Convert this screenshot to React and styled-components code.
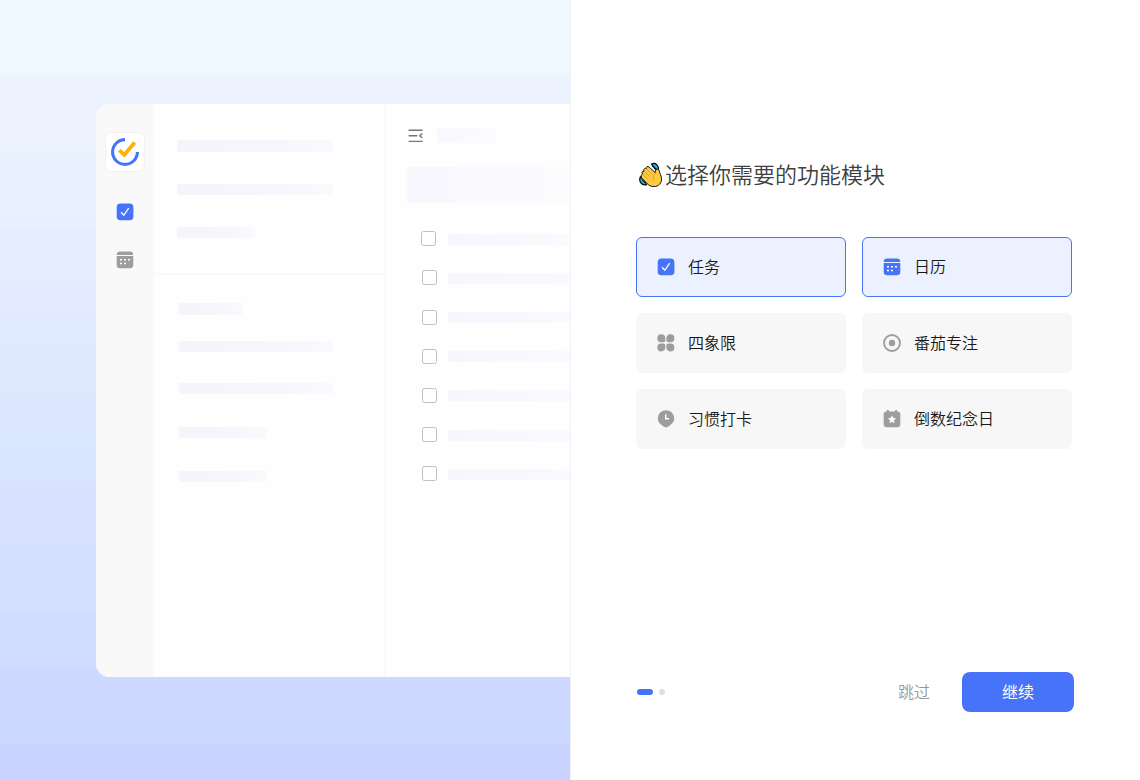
import React, { useState } from 'react';
import styled, { createGlobalStyle } from 'styled-components';

const GlobalStyle = createGlobalStyle`
  body {
    margin: 0;
    background: #fff;
    font-family: 'Noto Sans CJK SC', sans-serif;
  }
`;

const Page = styled.div`
  display: flex;
  width: 1140px;
  height: 780px;
  overflow: hidden;
`;

const Preview = styled.div`
  box-sizing: border-box;
  width: 570px;
  padding: 104px 0 0 96px;
  overflow: hidden;
  background: linear-gradient(
    180deg,
    #f0f8ff 0,
    #f0f8ff 74px,
    #ecf3ff 76px,
    #ecf3ff 150px,
    #e8f2ff 154px,
    #e6f0ff 228px,
    #e4eeff 232px,
    #e4edff 280px,
    #e3ebff 284px,
    #e2eaff 328px,
    #dfeaff 340px,
    #dde8ff 400px,
    #dbe6ff 440px,
    #d9e5ff 485px,
    #d8e2ff 488px,
    #d8e1ff 538px,
    #d3e1ff 546px,
    #d3e0ff 610px,
    #d0dcff 616px,
    #cfdbff 664px,
    #cdd9ff 670px,
    #cbd8ff 742px,
    #c8d4ff 746px,
    #c8d4ff 780px
  );
`;

const AppWindow = styled.div`
  display: flex;
  width: 474px;
  height: 573px;
  overflow: hidden;
  background: #fefefe;
  border-radius: 14px 0 0 14px;
`;

const Rail = styled.div`
  display: flex;
  flex-direction: column;
  align-items: center;
  width: 58px;
  padding-top: 29px;
  background: #f9f9f9;
`;

const Logo = styled.div`
  display: flex;
  align-items: center;
  justify-content: center;
  width: 38px;
  height: 38px;
  margin-bottom: 31px;
  background: #fff;
  border-radius: 6px;
  box-shadow: 0 0 0 1px #f1f1f1;
`;

const RailItem = styled.div`
  display: flex;
  height: 20px;
  margin-bottom: 28px;
`;

const Lists = styled.div`
  box-sizing: border-box;
  width: 232px;
  border-right: 2px solid #f9f9f9;
`;

const ListGroup = styled.div`
  box-sizing: border-box;
  height: ${({ $height }) => $height}px;
  padding: ${({ $pad }) => $pad};
  border-bottom: ${({ $line }) => ($line ? '2px solid #fafafa' : 'none')};
`;

const Bar = styled.div`
  width: ${({ $width }) => $width}px;
  height: ${({ $height }) => $height || 11}px;
  margin-bottom: ${({ $gap }) => $gap || 0}px;
  background: linear-gradient(90deg, #f4f5fb, #f6f7fc 70%, #faf9fe);
  border-radius: 2px;
`;

const Tasks = styled.div`
  flex: 1;
  min-width: 0;
  padding: 23px 0 0 21px;
  overflow: hidden;
`;

const TasksHeader = styled.div`
  display: flex;
  align-items: center;
  gap: 13px;
  height: 17px;
  margin-bottom: 23px;
`;

const HeaderBar = styled.div`
  width: 59px;
  height: 15px;
  background: linear-gradient(90deg, #f8f8fe, #fbfbff);
  border-radius: 2px;
`;

const InputBar = styled.div`
  height: 36px;
  margin-bottom: 27.8px;
  background: linear-gradient(90deg, #f8f8fe 0 46px, #faf9fe 46px 137px, #fbfbfe 137px);
  border-radius: 3px 0 0 3px;
`;

const TaskRow = styled.div`
  display: flex;
  align-items: center;
  height: 16px;
  margin-bottom: 23.15px;
  padding-left: ${({ $first }) => ($first ? 14 : 15)}px;
`;

const Box = styled.div`
  box-sizing: border-box;
  flex: none;
  width: 15px;
  height: 15px;
  margin-right: ${({ $first }) => ($first ? 12 : 11)}px;
  border: 1px solid #bfbfbf;
  border-radius: 2.5px;
`;

const TaskBar = styled.div`
  flex: 1;
  height: 11px;
  margin-top: 1px;
  background: linear-gradient(90deg, #f6f7fd, #f9f9fe);
  border-radius: 2px 0 0 2px;
`;

const Setup = styled.div`
  box-sizing: border-box;
  display: flex;
  flex-direction: column;
  width: 570px;
  padding: 158px 66px 68px 65px;
  background: #fff;
  border-left: 1px solid #f1f2f6;
`;

const Title = styled.h1`
  display: flex;
  align-items: center;
  gap: 2px;
  height: 34px;
  margin: 0 0 45px;
  padding-left: 3px;
  color: #404040;
  font-size: 22px;
  font-weight: 350;
  line-height: 30px;

  span {
    padding-bottom: 4px;
  }
`;

const Modules = styled.div`
  display: grid;
  grid-template-columns: 210px 210px;
  gap: 16px;
`;

const Module = styled.button`
  box-sizing: border-box;
  display: flex;
  align-items: center;
  gap: 12px;
  height: 60px;
  padding: 0 19px;
  color: #191919;
  font-family: inherit;
  font-size: 16px;
  font-weight: 350;
  background: ${({ $active }) => ($active ? '#ebf1fe' : '#f7f7f7')};
  border: 1px solid ${({ $active }) => ($active ? '#4772fa' : '#f7f7f7')};
  border-radius: 6px;

  svg {
    color: ${({ $active }) => ($active ? '#4772fa' : '#9d9d9d')};
  }
`;

const Label = styled.span`
  padding-bottom: 2px;
`;

const Footer = styled.div`
  display: flex;
  align-items: center;
  height: 40px;
  margin-top: auto;
`;

const Steps = styled.div`
  display: flex;
  gap: 6px;
  margin-right: auto;
  padding-left: 1px;
`;

const Step = styled.span`
  width: ${({ $current }) => ($current ? 16 : 6)}px;
  height: 6px;
  background: ${({ $current }) => ($current ? '#4772fa' : '#dfdfdf')};
  border-radius: 3px;
`;

const Skip = styled.button`
  margin-right: 32px;
  padding: 0 0 2px;
  color: #999;
  font: 350 16px 'Noto Sans CJK SC', sans-serif;
  background: none;
  border: 0;
`;

const Continue = styled.button`
  width: 112px;
  height: 40px;
  padding: 0 0 2px;
  color: #fff;
  font: 400 16px 'Noto Sans CJK SC', sans-serif;
  background: #4772fa;
  border: 0;
  border-radius: 8px;
`;

const TaskIcon = () => (
  <svg width="20" height="20" viewBox="0 0 20 20" fill="none">
    <rect x="1.7" y="1.6" width="16.7" height="16.7" rx="3.8" fill="currentColor" />
    <path d="M6 10.3l2.8 3 4.9-7.2" stroke="#fff" strokeWidth="1.3" />
  </svg>
);

const CalendarIcon = () => (
  <svg width="20" height="20" viewBox="0 0 20 20" fill="currentColor">
    <path d="M5.2 1.6h9.6a3.5 3.5 0 0 1 3.5 3.4H1.7a3.5 3.5 0 0 1 3.5-3.4z" />
    <path d="M1.7 6h16.6v8.8a3.5 3.5 0 0 1-3.5 3.5H5.2a3.5 3.5 0 0 1-3.5-3.5z" />
    <path d="M5 9.1h2v1.5H5zm4 0h2v1.5H9zm4 0h2v1.5h-2zM5 12.7h2v1.5H5zm4 0h2v1.5H9z" fill="#fff" />
  </svg>
);

const MatrixIcon = () => (
  <svg width="20" height="20" viewBox="0 0 20 20" fill="currentColor">
    <path d="M9.3 5.1v2.2c0 1.3-.7 2-2 2H5.1a4 4 0 1 1 4.2-4.2z" />
    <path d="M10.4 5.1v2.2c0 1.3.7 2 2 2h2.2a4 4 0 1 0-4.2-4.2z" />
    <path d="M9.3 14.6v-2.2c0-1.3-.7-2-2-2H5.1a4 4 0 1 0 4.2 4.2z" />
    <path d="M10.4 14.6v-2.2c0-1.3.7-2 2-2h2.2a4 4 0 1 1-4.2 4.2z" />
  </svg>
);

const FocusIcon = () => (
  <svg width="20" height="20" viewBox="0 0 20 20" fill="none">
    <circle cx="10" cy="10" r="8" stroke="currentColor" strokeWidth="1.9" />
    <circle cx="10" cy="10" r="3.2" fill="currentColor" />
  </svg>
);

const HabitIcon = () => (
  <svg width="20" height="20" viewBox="0 0 20 20" fill="none">
    <path
      d="M10 1.2a8.2 8.2 0 0 1 8.2 8.2c0 3.6-2.3 5.7-6.8 8.7a2.5 2.5 0 0 1-2.8 0C4.1 15.1 1.8 13 1.8 9.4A8.2 8.2 0 0 1 10 1.2z"
      fill="currentColor"
    />
    <path d="M9.7 5.2v4.6h3.4" stroke="#fff" strokeWidth="1.4" />
  </svg>
);

const CountdownIcon = () => (
  <svg width="20" height="20" viewBox="0 0 20 20" fill="currentColor">
    <path d="M4.8 2.4V1.3c0-.5 1.4-.5 1.8 0l.9 1.1h5l.9-1.1c.4-.5 1.8-.5 1.8 0v1.1a3.2 3.2 0 0 1 3.1 3.2v9.5a3.2 3.2 0 0 1-3.2 3.2H4.9a3.2 3.2 0 0 1-3.2-3.2V5.6a3.2 3.2 0 0 1 3.1-3.2z" />
    <path
      d="M10 6.9l1.1 2.2 2.5.4-1.8 1.8.4 2.5-2.2-1.2-2.2 1.2.4-2.5-1.8-1.8 2.5-.4z"
      fill="#fff"
      stroke="#fff"
      strokeWidth=".5"
      strokeLinejoin="round"
    />
  </svg>
);

const LogoIcon = () => (
  <svg width="30" height="30" viewBox="0 0 30 30" fill="none">
    <path d="M15 2.6A12.4 12.4 0 1 0 27.4 15" stroke="#4772fa" strokeWidth="3.1" />
    <path d="M9.3 13.2l5 4.6L24.7 5.5" stroke="#ffb000" strokeWidth="3.7" />
  </svg>
);

const FoldIcon = () => (
  <svg width="17" height="17" viewBox="0 0 17 17" fill="none" stroke="#777" strokeWidth="1.4">
    <path d="M1.6 3.2h14M1.6 8.7h8.7M1.6 14.4h14" />
    <path d="M15.2 6.4l-2.4 2.3 2.4 2.3" />
  </svg>
);

const WaveIcon = () => (
  <svg width="24" height="26" viewBox="0 0 24 26" strokeLinecap="round" strokeLinejoin="round">
    <path
      d="M12.5 2.2c3.6-2.2 8 1.2 6.7 6.2l-3.4-1.8zM1.4 14.8c-2 4.6 1.2 8.9 6 8l-2-4.4z"
      fill="#22b5dd"
      stroke="#000"
      strokeWidth="1.2"
    />
    <path d="M13.6 4.2c1.6.1 2.7 1.2 2.9 2.8M3.3 17c0 1.7.9 2.8 2.5 3.4" fill="none" stroke="#000" strokeWidth=".8" />
    <path
      d="M3.3 11.8c-1-1.7.4-3.2 1.8-2.5-1.1-1.8.6-3.7 2.3-2.5-.7-1.9 1.2-3.1 2.8-1.7l6 5.5.3-1.8c.4-2.2 3.2-2.2 3.9.2 0 2 1.9 4.3 2.1 7.3.4 4.8-2.8 8.3-7.6 8.3-3.3 0-5.2-1.5-6.9-3.2l-5-5c-1.5-1.7-.9-3.8.3-4.6z"
      fill="#ffca41"
      stroke="#111"
      strokeWidth="1"
    />
    <path
      d="M5.3 9.5l5 4.7M7.6 7l5.3 5M4.1 12.6l4.3 3.8M16.4 11.5c-2.4 2.1-2.4 4-1.5 6.1"
      fill="none"
      stroke="#d9931e"
      strokeWidth=".8"
    />
  </svg>
);

const modules = [
  { id: 'task', label: '任务', Icon: TaskIcon },
  { id: 'calendar', label: '日历', Icon: CalendarIcon },
  { id: 'matrix', label: '四象限', Icon: MatrixIcon },
  { id: 'focus', label: '番茄专注', Icon: FocusIcon },
  { id: 'habit', label: '习惯打卡', Icon: HabitIcon },
  { id: 'countdown', label: '倒数纪念日', Icon: CountdownIcon },
];

const railColors = { task: '#4772fa', calendar: '#9d9d9d' };

const AppPreview = ({ selected }) => (
  <AppWindow>
    <Rail>
      <Logo><LogoIcon /></Logo>
      {modules.filter(m => selected.includes(m.id)).map(({ id, Icon }) => (
        <RailItem key={id} style={{ color: railColors[id] || '#9d9d9d' }}>
          <Icon />
        </RailItem>
      ))}
    </Rail>
    <Lists>
      <ListGroup $height={171} $pad="36.4px 0 0 23.4px" $line>
        <Bar $width={155.6} $height={12} $gap={32} />
        <Bar $width={155.6} $gap={32} />
        <Bar $width={77.6} />
      </ListGroup>
      <ListGroup $height={402} $pad="28px 0 0 25px">
        <Bar $width={64} $height={12} $gap={26} />
        <Bar $width={154} $gap={31} />
        <Bar $width={154} $gap={33} />
        <Bar $width={88} $gap={33} />
        <Bar $width={88} />
      </ListGroup>
    </Lists>
    <Tasks>
      <TasksHeader>
        <FoldIcon />
        <HeaderBar />
      </TasksHeader>
      <InputBar />
      {[0, 1, 2, 3, 4, 5, 6].map(n => (
        <TaskRow key={n} $first={n === 0}>
          <Box $first={n === 0} />
          <TaskBar />
        </TaskRow>
      ))}
    </Tasks>
  </AppWindow>
);

const App = () => {
  const [selected, setSelected] = useState(['task', 'calendar']);

  const toggle = (id) => {
    setSelected(selected.includes(id) ? selected.filter(s => s !== id) : [...selected, id]);
  };

  return (
    <Page>
      <GlobalStyle />
      <Preview>
        <AppPreview selected={selected} />
      </Preview>
      <Setup>
        <Title><WaveIcon /><span>选择你需要的功能模块</span></Title>
        <Modules>
          {modules.map(({ id, label, Icon }) => (
            <Module key={id} $active={selected.includes(id)} onClick={() => toggle(id)}>
              <Icon />
              <Label>{label}</Label>
            </Module>
          ))}
        </Modules>
        <Footer>
          <Steps>
            <Step $current />
            <Step />
          </Steps>
          <Skip>跳过</Skip>
          <Continue>继续</Continue>
        </Footer>
      </Setup>
    </Page>
  );
};

export default App;
